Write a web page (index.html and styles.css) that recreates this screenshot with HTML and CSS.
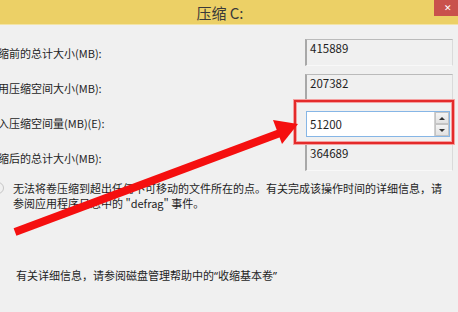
FILE: index.html
```html
<!DOCTYPE html>
<html lang="zh-CN">
<head>
    <meta charset="UTF-8">
    <meta name="viewport" content="width=device-width, initial-scale=1.0">
    <title>压缩 C:</title>
    <link rel="stylesheet" href="styles.css">
</head>
<body>
    <div class="titlebar">
        <span class="title">压缩 C:</span>
        <span class="close">&#x2715;</span>
    </div>

    <div class="form">
        <label class="label">压缩前的总计大小(MB):</label>
        <div class="readonly">415889</div>

        <label class="label">可用压缩空间大小(MB):</label>
        <div class="readonly">207382</div>

        <label class="label" for="shrinkSize">输入压缩空间量(MB)(E):</label>
        <div class="spin">
            <input type="text" id="shrinkSize" value="51200">
            <div class="spin-buttons">
                <span class="spin-up"></span>
                <span class="spin-down"></span>
            </div>
        </div>

        <label class="label">压缩后的总计大小(MB):</label>
        <div class="readonly">364689</div>
    </div>

    <div class="note">
        <span class="info-icon"></span>
        <p>无法将卷压缩到超出任何不可移动的文件所在的点。有关完成该操作时间的详细信息，请参阅应用程序日志中的 "defrag" 事件。</p>
    </div>

    <p class="help">有关详细信息，请参阅磁盘管理帮助中的<span class="q">“</span>收缩基本卷<span class="q">”</span></p>

    <!-- annotation drawn over the dialog -->
    <svg class="markup" width="458" height="312" viewBox="0 0 458 312">
        <rect x="295" y="101" width="158" height="42" fill="none" stroke="#f4a0a0" stroke-width="4"/>
        <rect x="295" y="101" width="158" height="42" fill="none" stroke="#e42a2a" stroke-width="2"/>
        <line x1="15" y1="232" x2="280" y2="133" stroke="#f50f0f" stroke-width="8"/>
        <polygon points="298,124 273,120 282,144" fill="#f50f0f"/>
    </svg>
</body>
</html>
```

FILE: styles.css
```css
body {
    margin: 0;
    width: 458px;
    height: 312px;
    overflow: hidden;
    background-color: #f0f0f0;
    font-family: "Noto Sans CJK SC", "Noto Sans", sans-serif;
    font-size: 11px;
    color: #1e1e1e;
    position: relative;
}
.titlebar {
    height: 24px;
    background-color: #ecd066;
    border-bottom: 1px solid #f3e4a6;
    display: flex;
    align-items: center;
    justify-content: center;
}
.title {
    font-size: 15px;
    color: #3a3a3a;
    margin-right: 18px;
}
.close {
    position: absolute;
    top: 0;
    right: 0;
    width: 24px;
    height: 16px;
    background-color: #c9514c;
    color: #fff;
    font-size: 9px;
    line-height: 16px;
    text-align: center;
    padding-left: 4px;
    box-sizing: border-box;
}
.form {
    margin-left: -13px;
    padding-top: 14px;
    display: grid;
    grid-template-columns: 318px 148px;
    grid-auto-rows: 27px;
    row-gap: 8px;
}
.label {
    align-self: center;
    white-space: nowrap;
    padding-top: 1px;
}
.readonly {
    box-sizing: border-box;
    height: 27px;
    border-top: 1px solid #bababa;
    border-left: 2px solid #a8a8a8;
    border-right: 1px solid #dadada;
    border-bottom: 1px solid #f8f8f8;
    padding: 0 3px;
    font-size: 11.5px;
    line-height: 16px;
}
.spin {
    display: flex;
    height: 26px;
    width: 144px;
    margin: 2px 0 0 1px;
    box-sizing: border-box;
    border: 1px solid #86b6e6;
    background-color: #fff;
}
.spin input {
    flex: 1;
    min-width: 0;
    border: none;
    outline: none;
    padding: 0 3px;
    font-family: "Noto Sans CJK SC", "Noto Sans", sans-serif;
    font-size: 11.5px;
    color: #1e1e1e;
    background: transparent;
}
.spin-buttons {
    width: 14px;
    display: flex;
    flex-direction: column;
    border-left: 1px solid #d0d0d0;
}
.spin-up, .spin-down {
    flex: 1;
    background: linear-gradient(#f4f4f4, #e2e2e2);
    border: 1px solid #c4c4c4;
    display: flex;
    align-items: center;
    justify-content: center;
}
.spin-up::after, .spin-down::after {
    content: "";
    border-left: 3px solid transparent;
    border-right: 3px solid transparent;
}
.spin-up::after {
    border-bottom: 3px solid #333;
}
.spin-down::after {
    border-top: 3px solid #333;
}
.note {
    display: flex;
    margin-top: 10px;
}
.info-icon {
    width: 10px;
    height: 10px;
    border: 1px solid #c6c6c6;
    border-radius: 50%;
    margin: 1px 9px 0 -8px;
    flex-shrink: 0;
}
.note p {
    margin: 0;
    width: 436px;
    line-height: 15px;
}
.help {
    margin: 57px 0 0 16px;
    line-height: 15px;
}
.q {
    font-family: "Noto Sans", sans-serif;
}
.markup {
    position: absolute;
    top: 0;
    left: 0;
    pointer-events: none;
}
```
